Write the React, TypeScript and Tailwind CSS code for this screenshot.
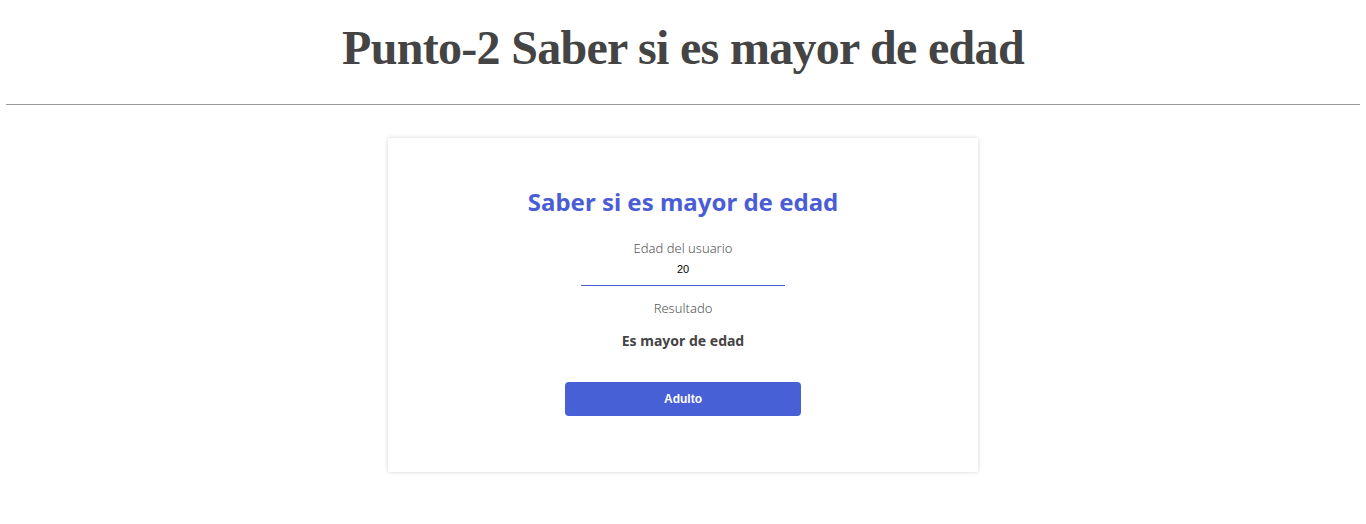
export default function App() {
  return (
    <div className="min-h-[524px] bg-white">
      <header className="pt-[20px] pb-[28px]">
        <h1 className="text-center text-[48px] font-bold leading-[56px] tracking-[-0.7px] text-[#444] [font-family:'Liberation_Serif',serif]">
          Punto-2 Saber si es mayor de edad
        </h1>
      </header>
      <hr className="mx-[6px] border-t border-[#999]" />
      <main className="flex justify-center pt-[33px]">
        <section className="flex w-[590px] flex-col items-center bg-white pt-[47px] pb-[56px] shadow-[0_0_4px_rgba(0,0,0,0.18)] [font-family:'Noto_Sans',sans-serif]">
          <h2 className="text-[24px] font-bold leading-[34px] text-[#4a5dd6]">
            Saber si es mayor de edad
          </h2>
          <label className="mt-[20px] text-[13px] font-light leading-[18px] text-[#555]">
            Edad del usuario
          </label>
          <input
            readOnly
            value="20"
            className="mt-[4px] w-[204px] border-b border-[#4a5dd6] pb-[7px] text-center text-[11px] text-black outline-none [font-family:'Liberation_Sans',sans-serif]"
          />
          <p className="mt-[13px] text-[13px] font-light leading-[18px] text-[#555]">Resultado</p>
          <p className="mt-[14px] text-[14px] font-bold leading-[20px] text-[#444]">Es mayor de edad</p>
          <button className="mt-[31px] h-[34px] w-[236px] rounded-[4px] bg-[#4760d6] text-[12px] font-bold text-white [font-family:'Liberation_Sans',sans-serif]">
            Adulto
          </button>
        </section>
      </main>
    </div>
  );
}
